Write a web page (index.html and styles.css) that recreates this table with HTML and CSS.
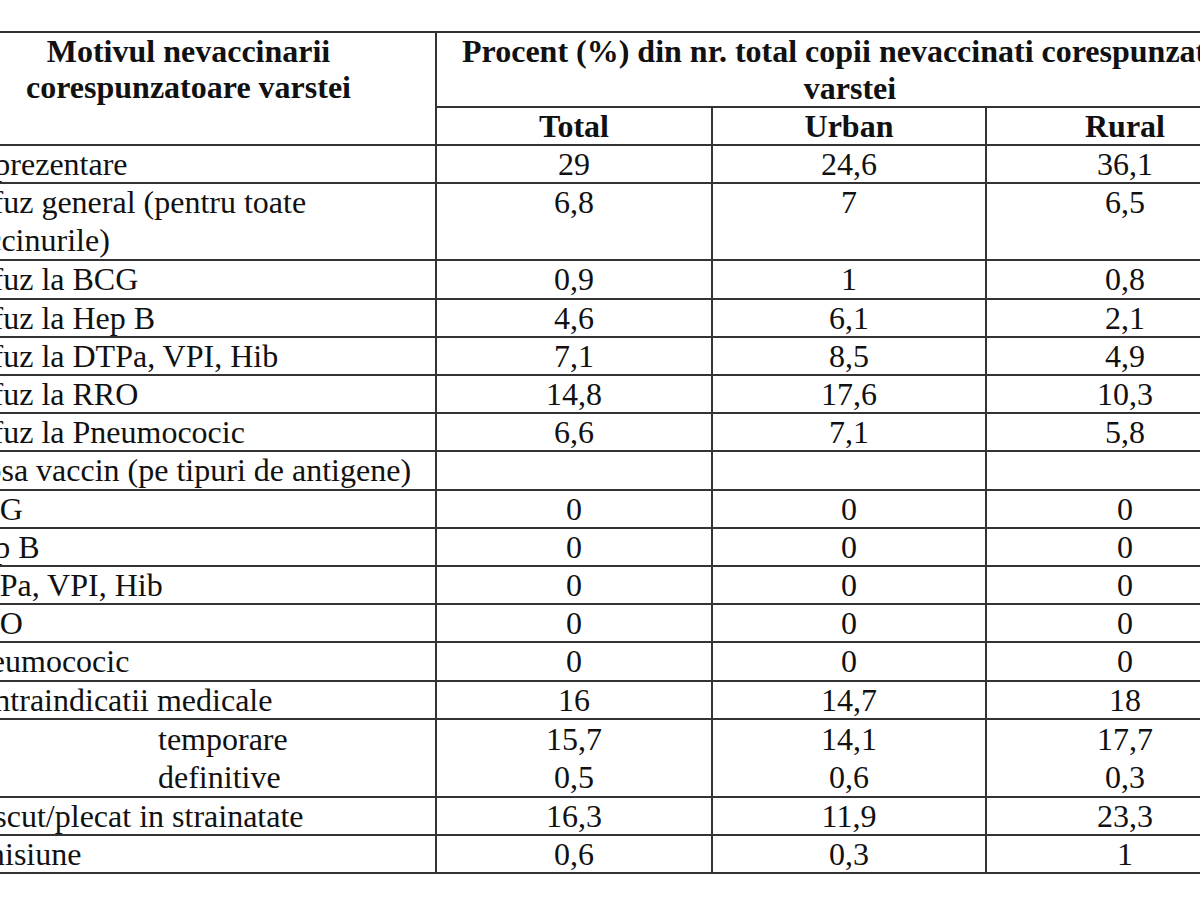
FILE: index.html
```html
<!DOCTYPE html>
<html lang="ro">
<head>
<meta charset="utf-8">
<title>Motivul nevaccinarii</title>
<link rel="stylesheet" href="styles.css">
</head>
<body>
<table class="data">
  <colgroup>
    <col class="c-motiv">
    <col class="c-total">
    <col class="c-urban">
    <col class="c-rural">
  </colgroup>
  <thead>
    <tr>
      <th rowspan="2" class="h-motiv">Motivul nevaccinarii corespunzatoare varstei</th>
      <th colspan="3" class="h-proc"><span class="h-line">Procent (%) din nr. total copii nevaccinati corespunzatoare</span><br>varstei</th>
    </tr>
    <tr>
      <th>Total</th>
      <th>Urban</th>
      <th>Rural</th>
    </tr>
  </thead>
  <tbody>
    <tr><td class="lbl">Neprezentare</td><td>29</td><td>24,6</td><td>36,1</td></tr>
    <tr class="two"><td class="lbl">Refuz general (pentru toate vaccinurile)</td><td>6,8</td><td>7</td><td>6,5</td></tr>
    <tr><td class="lbl">Refuz la BCG</td><td>0,9</td><td>1</td><td>0,8</td></tr>
    <tr><td class="lbl">Refuz la Hep B</td><td>4,6</td><td>6,1</td><td>2,1</td></tr>
    <tr><td class="lbl">Refuz la DTPa, VPI, Hib</td><td>7,1</td><td>8,5</td><td>4,9</td></tr>
    <tr><td class="lbl">Refuz la RRO</td><td>14,8</td><td>17,6</td><td>10,3</td></tr>
    <tr><td class="lbl">Refuz la Pneumococic</td><td>6,6</td><td>7,1</td><td>5,8</td></tr>
    <tr><td class="lbl">Lipsa vaccin (pe tipuri de antigene)</td><td></td><td></td><td></td></tr>
    <tr><td class="lbl">BCG</td><td>0</td><td>0</td><td>0</td></tr>
    <tr><td class="lbl">Hep B</td><td>0</td><td>0</td><td>0</td></tr>
    <tr><td class="lbl">DTPa, VPI, Hib</td><td>0</td><td>0</td><td>0</td></tr>
    <tr><td class="lbl">RRO</td><td>0</td><td>0</td><td>0</td></tr>
    <tr><td class="lbl">Pneumococic</td><td>0</td><td>0</td><td>0</td></tr>
    <tr><td class="lbl">Contraindicatii medicale</td><td>16</td><td>14,7</td><td>18</td></tr>
    <tr class="two tall"><td class="lbl sub">temporare<br>definitive</td><td>15,7<br>0,5</td><td>14,1<br>0,6</td><td>17,7<br>0,3</td></tr>
    <tr><td class="lbl">Nascut/plecat in strainatate</td><td>16,3</td><td>11,9</td><td>23,3</td></tr>
    <tr><td class="lbl">Omisiune</td><td>0,6</td><td>0,3</td><td>1</td></tr>
  </tbody>
</table>
</body>
</html>
```
FILE: styles.css
```css
html, body {
  margin: 0;
  padding: 0;
  overflow: hidden;
  background: #ffffff;
}

body {
  width: 1200px;
  height: 900px;
  font-family: "Liberation Serif", "Times New Roman", serif;
  color: #111111;
}

.data {
  border-collapse: collapse;
  table-layout: fixed;
  width: 1323px;
  margin: 31px 0 0 -60px;
  font-size: 32px;
  line-height: 36.2px;
}

.c-motiv { width: 495px; }
.c-total { width: 276px; }
.c-urban { width: 274px; }
.c-rural { width: 278px; }

.data th,
.data td {
  border: 2px solid #333333;
  padding: 0 15px;
  vertical-align: top;
  text-align: center;
}

.data th {
  font-weight: bold;
}

.data th.h-proc {
  padding: 0 25px;
  line-height: 36.5px;
}

.h-line {
  white-space: nowrap;
}

.data tr.two td {
  line-height: 37.5px;
}

.data tr.tall td {
  line-height: 38px;
}

.data td.lbl {
  text-align: left;
}

.data td.sub {
  padding-left: 216px;
}
```
